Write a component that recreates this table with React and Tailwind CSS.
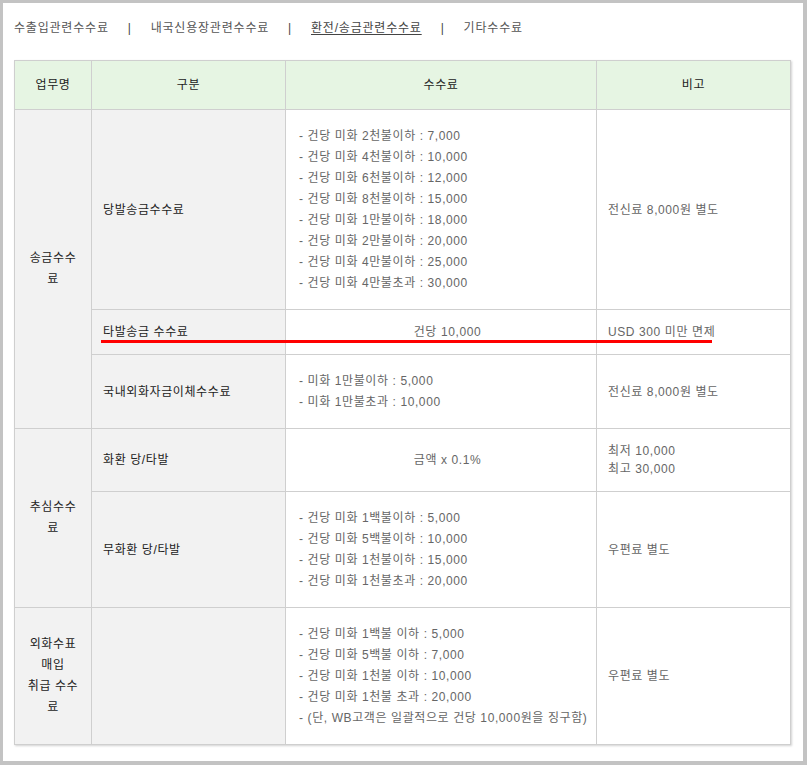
import React from 'react';

const nav = ['수출입관련수수료', '내국신용장관련수수료', '환전/송금관련수수료', '기타수수료'];

function List({ items }) {
  return (
    <ul className="leading-[21px]">
      {items.map((t) => (
        <li key={t}>- {t}</li>
      ))}
    </ul>
  );
}

export default function App() {
  const th = 'border border-[#cfcfcf] bg-[#e6f5e3] text-[#222] font-normal text-center';
  const c1 = 'border border-[#cfcfcf] bg-[#f2f2f2] text-[#222] text-center leading-[21px]';
  const c2 = 'border border-[#cfcfcf] bg-[#f2f2f2] text-[#222] pl-[11px]';
  const c3 = 'border border-[#cfcfcf] bg-white text-[#666] pl-[13px]';
  const c4 = 'border border-[#cfcfcf] bg-white text-[#666] pl-[11px]';

  return (
    <div className="w-[807px] h-[765px] bg-[#c3c3c3] pl-[3px] pt-[3px] pr-[4px] pb-[4px] font-['Liberation_Sans','Noto_Sans_CJK_KR',sans-serif] text-[12px] tracking-[0.6px]">
      <div className="relative w-full h-full bg-white px-[11px] pt-[15px]">
        {/* top tabs */}
        <div className="flex items-center h-[20px] text-[#555] tracking-[0.8px]">
          {nav.map((n, i) => (
            <React.Fragment key={n}>
              {i > 0 && <span className="px-[19px] text-[#444]">|</span>}
              <span className={i === 2 ? 'underline underline-offset-2 text-[#444]' : ''}>{n}</span>
            </React.Fragment>
          ))}
        </div>

        {/* fee table */}
        <table className="mt-[22px] w-[776px] border-collapse table-fixed shadow-[1px_1px_2px_rgba(0,0,0,0.18)]">
          <colgroup>
            <col className="w-[77px]" />
            <col className="w-[194px]" />
            <col className="w-[311px]" />
            <col className="w-[194px]" />
          </colgroup>
          <thead>
            <tr className="h-[49px]">
              <th className={th}>업무명</th>
              <th className={th}>구분</th>
              <th className={th}>수수료</th>
              <th className={th}>비고</th>
            </tr>
          </thead>
          <tbody>
            <tr className="h-[200px]">
              <td rowSpan={3} className={c1}>송금수수<br />료</td>
              <td className={c2}>당발송금수수료</td>
              <td className={c3}>
                <List
                  items={[
                    '건당 미화 2천불이하 : 7,000',
                    '건당 미화 4천불이하 : 10,000',
                    '건당 미화 6천불이하 : 12,000',
                    '건당 미화 8천불이하 : 15,000',
                    '건당 미화 1만불이하 : 18,000',
                    '건당 미화 2만불이하 : 20,000',
                    '건당 미화 4만불이하 : 25,000',
                    '건당 미화 4만불초과 : 30,000',
                  ]}
                />
              </td>
              <td className={c4}>전신료 8,000원 별도</td>
            </tr>
            <tr className="h-[45px]">
              <td className={c2}>타발송금 수수료</td>
              <td className={`${c3} text-center pl-0`}>건당 10,000</td>
              <td className={c4}>USD 300 미만 면제</td>
            </tr>
            <tr className="h-[74px]">
              <td className={c2}>국내외화자금이체수수료</td>
              <td className={c3}>
                <List items={['미화 1만불이하 : 5,000', '미화 1만불초과 : 10,000']} />
              </td>
              <td className={c4}>전신료 8,000원 별도</td>
            </tr>
            <tr className="h-[63px]">
              <td rowSpan={2} className={c1}>추심수수<br />료</td>
              <td className={c2}>화환 당/타발</td>
              <td className={`${c3} text-center pl-0`}>금액 x 0.1%</td>
              <td className={`${c4} leading-[18px]`}>최저 10,000<br />최고 30,000</td>
            </tr>
            <tr className="h-[116px]">
              <td className={c2}>무화환 당/타발</td>
              <td className={c3}>
                <List
                  items={[
                    '건당 미화 1백불이하 : 5,000',
                    '건당 미화 5백불이하 : 10,000',
                    '건당 미화 1천불이하 : 15,000',
                    '건당 미화 1천불초과 : 20,000',
                  ]}
                />
              </td>
              <td className={c4}>우편료 별도</td>
            </tr>
            <tr className="h-[137px]">
              <td className={c1}>외화수표<br />매입<br />취급 수수<br />료</td>
              <td className={c2}></td>
              <td className={c3}>
                <List
                  items={[
                    '건당 미화 1백불 이하 : 5,000',
                    '건당 미화 5백불 이하 : 7,000',
                    '건당 미화 1천불 이하 : 10,000',
                    '건당 미화 1천불 초과 : 20,000',
                    '(단, WB고객은 일괄적으로 건당 10,000원을 징구함)',
                  ]}
                />
              </td>
              <td className={c4}>우편료 별도</td>
            </tr>
          </tbody>
        </table>

        {/* red annotation underline */}
        <div className="absolute left-[98px] top-[337px] w-[611px] h-[3px] bg-[#ff0000]" />
      </div>
    </div>
  );
}
